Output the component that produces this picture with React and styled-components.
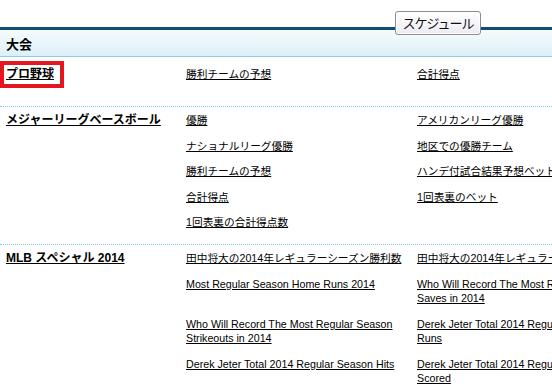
import React from "react";
import styled, { createGlobalStyle } from "styled-components";

const Global = createGlobalStyle`
  html, body { margin: 0; padding: 0; background: #fff; overflow: hidden; }
  body { font-family: "Liberation Sans", Arial, "Noto Sans CJK JP", sans-serif; color: #000; }
  * { box-sizing: border-box; }
`;

const Page = styled.div`
  position: relative;
  width: 100%;
  padding-top: 27px;
`;

const ScheduleButton = styled.button`
  position: absolute;
  left: 395px;
  top: 11px;
  width: 86px;
  height: 24px;
  padding: 0;
  border: 1px solid #8c8c94;
  border-radius: 3px;
  background: linear-gradient(#ffffff, #ecebf2);
  font-family: "Noto Sans CJK JP", sans-serif;
  font-size: 13px;
  letter-spacing: -1px;
  color: #111;
  line-height: 22px;
  box-shadow: inset 0 0 0 1px #fff;
`;

const HeaderBand = styled.div`
  border-top: 3px solid #0c4e76;
  border-bottom: 1px solid #88cce6;
  height: 30px;
  background: linear-gradient(#f6fbfd, #ddf0f7);
  display: flex;
  align-items: center;
  padding-left: 6px;
  font-family: "Noto Sans CJK JP", sans-serif;
  font-weight: bold;
  font-size: 13px;
`;

const Section = styled.div`
  display: flex;
  align-items: flex-start;
  width: 100%;
  border-bottom: 1px dotted #86c9e2;
  padding: ${(p) => p.$pad};
`;

const TitleCell = styled.div`
  flex: 0 0 186px;
  padding-left: ${(p) => (p.$highlight ? 0 : 6)}px;
  font-size: 12px;
  line-height: 14px;
`;

const TitleLink = styled.a`
  font-family: "Liberation Sans", Arial, "Noto Sans CJK JP", sans-serif;
  font-weight: bold;
  font-size: 12px;
  color: #000;
  text-decoration: underline;
  white-space: nowrap;
`;

const HighlightBox = styled.div`
  width: fit-content;
  border: 4px solid #e3171f;
  padding: 0 6px 0 2px;
  line-height: 19px;
`;

const ItemGrid = styled.div`
  flex: 0 0 auto;
  display: grid;
  grid-template-columns: 231px 231px;
  row-gap: ${(p) => p.$gap}px;
  padding-top: ${(p) => p.$top || 0}px;
`;

const ItemLink = styled.a`
  display: block;
  padding-right: 3px;
  font-family: "Liberation Sans", Arial, "Noto Sans CJK JP", sans-serif;
  font-size: 10.7px;
  line-height: 14px;
  color: #000;
  text-decoration: underline;
`;

const sections = [
  {
    title: "プロ野球",
    highlight: true,
    pad: "4px 0 18px",
    gridTop: 6,
    gap: 12,
    items: ["勝利チームの予想", "合計得点"],
  },
  {
    title: "メジャーリーグベースボール",
    pad: "6px 0 15px",
    gap: 11.5,
    items: [
      "優勝",
      "アメリカンリーグ優勝",
      "ナショナルリーグ優勝",
      "地区での優勝チーム",
      "勝利チームの予想",
      "ハンデ付試合結果予想ベット",
      "合計得点",
      "1回表裏のベット",
      "1回表裏の合計得点数",
    ],
  },
  {
    title: "MLB スペシャル 2014",
    pad: "6px 0 15px",
    gap: 12,
    items: [
      "田中将大の2014年レギュラーシーズン勝利数",
      "田中将大の2014年レギュラーシーズン防御率",
      "Most Regular Season Home Runs 2014",
      "Who Will Record The Most Regular Season Saves in 2014",
      "Who Will Record The Most Regular Season Strikeouts in 2014",
      "Derek Jeter Total 2014 Regular Season Home Runs",
      "Derek Jeter Total 2014 Regular Season Hits",
      "Derek Jeter Total 2014 Regular Season Runs Scored",
    ],
  },
];

export default function App() {
  return (
    <>
      <Global />
      <Page>
        <ScheduleButton>スケジュール</ScheduleButton>
        <HeaderBand>大会</HeaderBand>
        {sections.map((s) => (
          <Section key={s.title} $pad={s.pad}>
            <TitleCell $highlight={s.highlight}>
              {s.highlight ? (
                <HighlightBox>
                  <TitleLink href="#">{s.title}</TitleLink>
                </HighlightBox>
              ) : (
                <TitleLink href="#">{s.title}</TitleLink>
              )}
            </TitleCell>
            <ItemGrid $gap={s.gap} $top={s.gridTop}>
              {s.items.map((it) => (
                <ItemLink key={it} href="#">
                  {it}
                </ItemLink>
              ))}
            </ItemGrid>
          </Section>
        ))}
      </Page>
    </>
  );
}
